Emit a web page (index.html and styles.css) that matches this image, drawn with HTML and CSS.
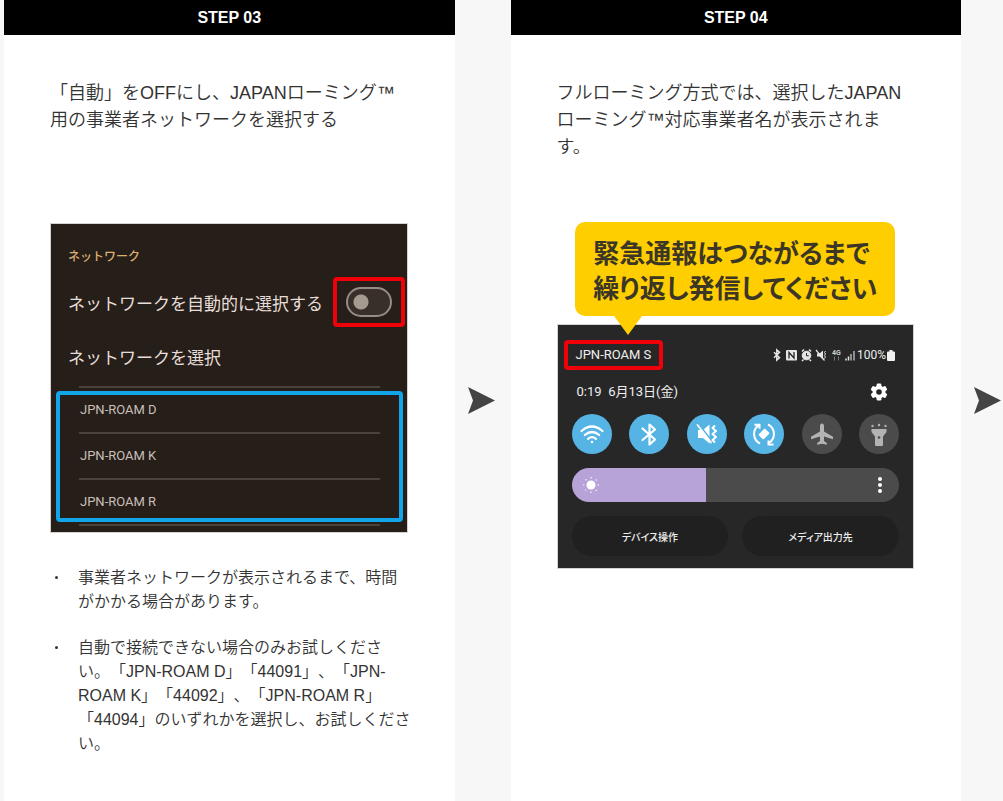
FILE: index.html
```html
<!DOCTYPE html>
<html lang="ja">
<head>
<meta charset="utf-8">
<meta name="viewport" content="width=device-width, initial-scale=1">
<title>JAPANローミング 手順</title>
<link rel="stylesheet" href="styles.css">
</head>
<body>
<main class="steps">
  <section class="step">
    <h2 class="step-title">STEP 03</h2>
    <div class="step-body">
      <p class="lead">「自動」をOFFにし、JAPANローミング™<br>用の事業者ネットワークを選択する</p>
      <div class="phone network">
        <p class="net-caption">ネットワーク</p>
        <div class="net-auto">
          <label for="auto">ネットワークを自動的に選択する</label>
          <span class="net-switch"><input type="checkbox" id="auto" class="switch"></span>
        </div>
        <p class="net-select">ネットワークを選択</p>
        <div class="net-choices">
          <ul class="net-list">
            <li>JPN-ROAM D</li>
            <li>JPN-ROAM K</li>
            <li>JPN-ROAM R</li>
          </ul>
        </div>
      </div>
      <ul class="notes">
        <li>事業者ネットワークが表示されるまで、時間<br>がかかる場合があります。</li>
        <li>自動で接続できない場合のみお試しくださ<br>い。「JPN-ROAM D」「44091」、「JPN-<br>ROAM K」「44092」、「JPN-ROAM R」<br>「44094」のいずれかを選択し、お試しくださ<br>い。</li>
      </ul>
    </div>
  </section>

  <div class="arrow"><svg width="27" height="27" viewBox="0 0 27 27" aria-hidden="true"><path d="M0 0 27 13.5 0 27 5 13.5z" fill="#444"/></svg></div>

  <section class="step">
    <h2 class="step-title">STEP 04</h2>
    <div class="step-body">
      <p class="lead">フルローミング方式では、選択したJAPAN<br>ローミング™対応事業者名が表示されま<br>す。</p>
      <p class="bubble">緊急通報はつながるまで<br>繰り返し発信してください</p>
      <div class="phone panel">
        <div class="status">
          <span class="carrier">JPN-ROAM S</span>
          <span class="status-icons">
            <svg width="84" height="14" viewBox="0 0 84 14" fill="none" stroke="#e6e6e6" aria-hidden="true">
              <path d="M2 4.2 7.5 9.6 4.8 12V2L7.5 4.4 2 9.8" stroke-width="1.5"/>
              <rect x="14" y="2" width="11" height="10.500" rx="1" fill="#e6e6e6" stroke="none"/>
              <path d="M17 10.500V4.500l5 5.500V4" stroke="#262626" stroke-width="1.300"/>
              <circle cx="34.500" cy="7.500" r="4.300" fill="#e6e6e6"/><path d="M30 3.500l2-2M39 3.500l-2-2M31.500 11.500l-1.500 1.500M37.500 11.500l1.500 1.500" stroke-width="1.500"/>
              <path d="M34.500 5v2.800h2.300" stroke="#262626"/>
              <path d="M45 5.500h2.500L51 2.500v9l-3.500-3H45z" fill="#e6e6e6" stroke="none"/>
              <path d="M44 2l8.500 10.500" stroke-width="1.200"/><path d="M53.500 3l-1 1.500 1 1.500-1 1.500 1 1.500-1 1.500"/>
              <text x="60" y="6.500" class="tiny">4G</text>
              <path d="M62.500 8.500v4M66.500 8.500v4" stroke="#777"/>
              <path d="M74 12.500v-2M76.500 12.500V8.500" stroke-width="1.500"/><path d="M79 12.500V6M82 12.500V3" stroke-width="1.800" stroke="#999"/>
            </svg>
            <span>100%</span>
            <svg width="8" height="11" viewBox="0 0 8 11" aria-hidden="true"><path d="M2.500 0h3v1.500H7q1 0 1 1V10q0 1-1 1H1q-1 0-1-1V2.500q0-1 1-1h1.500z" fill="#f2f2f2"/></svg>
          </span>
        </div>
        <div class="clock">
          <span>0:19&ensp;6月13日(金)</span>
          <button class="plain" aria-label="設定"><svg width="18" height="18" viewBox="0 0 18 18" aria-hidden="true"><g fill="#fff"><circle cx="9" cy="9" r="6.500"/><g id="tooth"><rect x="6.600" y="0.500" width="4.800" height="17" rx="1.300"/></g><use href="#tooth" transform="rotate(60 9 9)"/><use href="#tooth" transform="rotate(120 9 9)"/></g><circle cx="9" cy="9" r="2.800" fill="#272727"/></svg></button>
        </div>
        <div class="toggles">
          <button class="round on" aria-label="Wi-Fi"><svg viewBox="0 0 40 40" fill="none" stroke="#fff" stroke-width="2.200" stroke-linecap="round"><path d="M9.500 17q10.500-9 21 0M12.800 21q7.200-6 14.400 0M16 24.800q4-3.200 8 0"/><circle cx="20" cy="28" r="1.300" fill="#fff" stroke="none"/></svg></button>
          <button class="round on" aria-label="Bluetooth"><svg viewBox="0 0 40 40" fill="none" stroke="#fff" stroke-width="2.200" stroke-linejoin="round" stroke-linecap="round"><path d="M13.500 14.500 26 25.500 20.500 30.500V10.500L26 15.500 13.500 26"/></svg></button>
          <button class="round on" aria-label="バイブ"><svg viewBox="0 0 40 40" fill="none" stroke="#fff"><path d="M11 16h5l6.500-5.500v19L16 24H11z" fill="#fff" stroke="none"/><path d="M12 10.500 24.500 26.500" stroke="#55b4e4" stroke-width="1.600"/><path d="M10.500 11 24 28.500" stroke-width="1.800" stroke-linecap="round"/><path d="M28 11.500l-2.500 2.500 3.500 3-3.500 3 3.500 3-3.500 3 2.500 2.500" stroke-width="2" stroke-linejoin="round"/></svg></button>
          <button class="round on" aria-label="自動回転"><svg viewBox="0 0 40 40" fill="none" stroke="#fff" stroke-width="2"><path d="M16 29.500A10.500 10.500 0 0 1 14.500 11.500M24 10.500A10.500 10.500 0 0 1 25.500 28.500M10.500 10.800h5v4M29.500 30.500h-5v-4"/><rect x="16.500" y="15.500" width="7" height="9" rx="1" transform="rotate(45 20 20)" fill="#fff" stroke="none"/></svg></button>
          <button class="round" aria-label="機内モード"><svg viewBox="0 0 40 40" fill="#b3b3b3"><path d="M20 9.500q2 0 2 3v5l9 5.200v2.600l-9-2.800v4.500l2.800 2v1.800L20 29.700l-4.800 1.100V29l2.800-2v-4.500l-9 2.800v-2.600l9-5.200v-5q0-3 2-3z"/></svg></button>
          <button class="round" aria-label="ライト"><svg viewBox="0 0 40 40" fill="#b3b3b3"><path d="M12.500 15h15v3L24 22.500V31q0 1-1 1h-6q-1 0-1-1v-8.500L12.500 18z"/><circle cx="20" cy="23.500" r="1.300" fill="#4b4b4b"/><circle cx="13.500" cy="12" r="1.200"/><circle cx="20" cy="11" r="1.200"/><circle cx="26.500" cy="12" r="1.200"/></svg></button>
        </div>
        <div class="brightness">
          <input type="range" min="0" max="100" value="41" aria-label="明るさ">
          <svg class="sun" width="18" height="18" viewBox="0 0 18 18" aria-hidden="true"><circle cx="9" cy="9" r="4.500" fill="#fff"/><circle cx="9" cy="9" r="7.300" fill="none" stroke="#fff" stroke-width="1.400" stroke-linecap="round" stroke-dasharray="0 5.734"/></svg>
          <svg class="more" width="4" height="16" viewBox="0 0 4 16" fill="#fff" aria-hidden="true"><circle cx="2" cy="2" r="2"/><circle cx="2" cy="8" r="2"/><circle cx="2" cy="14" r="2"/></svg>
        </div>
        <div class="actions">
          <button>デバイス操作</button>
          <button>メディア出力先</button>
        </div>
      </div>
    </div>
  </section>

  <div class="arrow"><svg width="27" height="27" viewBox="0 0 27 27" aria-hidden="true"><path d="M0 0 27 13.500 0 27 5 13.500z" fill="#444"/></svg></div>
</main>
</body>
</html>
```
FILE: styles.css
```css
* { box-sizing: border-box; }

body {
  margin: 0;
  background: #f7f7f7;
  color: #333;
  font-family: "Liberation Sans", "Noto Sans CJK JP", sans-serif;
  text-spacing-trim: space-all;
}

p, h2, ul { margin: 0; padding: 0; }
ul { list-style: none; }
svg { display: block; }
button { border: 0; padding: 0; font: inherit; color: inherit; cursor: pointer; }

.steps {
  display: grid;
  grid-template-columns: minmax(0, 1fr) 56px minmax(0, 1fr) 42px;
  min-height: 100vh;
  padding-left: 4px;
}

.step { background: #fff; }

.step-title {
  background: #000;
  color: #fff;
  font-size: 16px;
  line-height: 35px;
  text-align: center;
}

.step-body { padding: 45px 47px 40px 46px; }

.lead {
  min-height: 142px;
  font-size: 18px;
  font-weight: 350;
  line-height: 27px;
  white-space: nowrap;
}

.arrow {
  display: flex;
  align-items: center;
  padding-left: 13px;
}

.phone { border: 1px solid #d5d2d0; }

/* Network settings screen */
.network {
  margin-top: 1px;
  padding: 23px 2px 6px 17px;
  background: #261e19;
  color: #e6ddd8;
  font-family: Roboto, "Noto Sans CJK JP", sans-serif;
}

.net-caption {
  color: #dcb070;
  font-size: 12px;
  font-weight: 500;
  line-height: 20px;
}

.net-auto {
  display: flex;
  align-items: center;
  justify-content: space-between;
  margin-top: 10px;
  font-size: 17px;
  white-space: nowrap;
}

.net-switch {
  display: flex;
  align-items: center;
  padding: 6px 9px;
  border: 4px solid #f00008;
  border-radius: 4px;
}

.switch {
  appearance: none;
  width: 46px;
  height: 30px;
  margin: 0;
  border: 2px solid #978b85;
  border-radius: 15px;
  background: radial-gradient(circle at 13px 13px, #a59a90 7px, #382f2b 8px);
}

.net-select {
  margin-top: 19px;
  font-size: 17px;
  line-height: 24px;
}

.net-choices {
  position: relative;
  margin: 16px 25px 0 11px;
}

.net-choices::after {
  content: "";
  position: absolute;
  inset: 5px -23px 4px;
  border: 4px solid #12a5ea;
  border-radius: 4px;
}

.net-list {
  border-top: 2px solid #4b413d;
  color: #c9bfb9;
  font-size: 13px;
}

.net-list li {
  padding-left: 1px;
  border-bottom: 2px solid #4b413d;
  line-height: 44px;
}

.notes {
  display: grid;
  gap: 22px;
  margin-top: 33px;
  font-size: 16px;
  font-weight: 350;
  line-height: 24px;
  white-space: nowrap;
}

.notes li {
  position: relative;
  padding-left: 28px;
}

.notes li::before {
  content: "";
  position: absolute;
  left: 5px;
  top: 10px;
  width: 3px;
  height: 3px;
  border-radius: 50%;
  background: #333;
}

/* Speech bubble over the quick panel */
.bubble {
  position: relative;
  width: 320px;
  margin: 0 auto 8px;
  padding: 12px 18px;
  border-radius: 10px;
  background: #ffce00;
  color: #3c3626;
  font-family: "Noto Sans CJK JP", sans-serif;
  font-size: 26px;
  font-weight: 700;
  font-feature-settings: "palt";
  line-height: 35px;
  white-space: nowrap;
}

.bubble::after {
  content: "";
  position: absolute;
  top: 100%;
  left: 39px;
  border: 14px solid transparent;
  border-top: 19px solid #ffce00;
  border-bottom: 0;
}

/* Quick panel */
.panel {
  padding: 15px 14px 12px;
  background: #272727;
  color: #efefef;
  font-family: Roboto, "Noto Sans CJK JP", sans-serif;
  font-size: 13px;
}

.status, .clock, .toggles, .actions {
  display: flex;
  align-items: center;
  justify-content: space-between;
}

.status { margin: 0 4px 0 -8px; }

.carrier {
  padding: 0 8px;
  border: 4px solid #f00008;
  border-radius: 4px;
  line-height: 22px;
}

.status-icons { display: flex; align-items: center; gap: 1px; font-size: 12px; }
.tiny { font: 700 7px Roboto, sans-serif; fill: #ccc; stroke: none; }

.clock {
  margin: 11px 11px 0 5px;
  line-height: 22px;
}

.plain { background: none; }

.toggles { margin-top: 11px; }

.round {
  width: 40px;
  height: 40px;
  border-radius: 50%;
  background: #4b4b4b;
}

.round.on { background: #55b4e4; }

.brightness {
  position: relative;
  margin-top: 14px;
}

.brightness input {
  appearance: none;
  display: block;
  width: 100%;
  height: 34px;
  margin: 0;
  border-radius: 17px;
  background: linear-gradient(90deg, #b8a3d9 41%, #4b4b4b 41%);
}

.brightness input::-webkit-slider-thumb { appearance: none; width: 1px; height: 34px; }

.sun { position: absolute; left: 10px; top: 8px; }
.more { position: absolute; right: 17px; top: 9px; }

.actions {
  gap: 14px;
  margin-top: 14px;
}

.actions button {
  flex: 1;
  height: 40px;
  border-radius: 20px;
  background: #202020;
  font-size: 10px;
  font-weight: 500;
  font-feature-settings: "palt";
}
```
